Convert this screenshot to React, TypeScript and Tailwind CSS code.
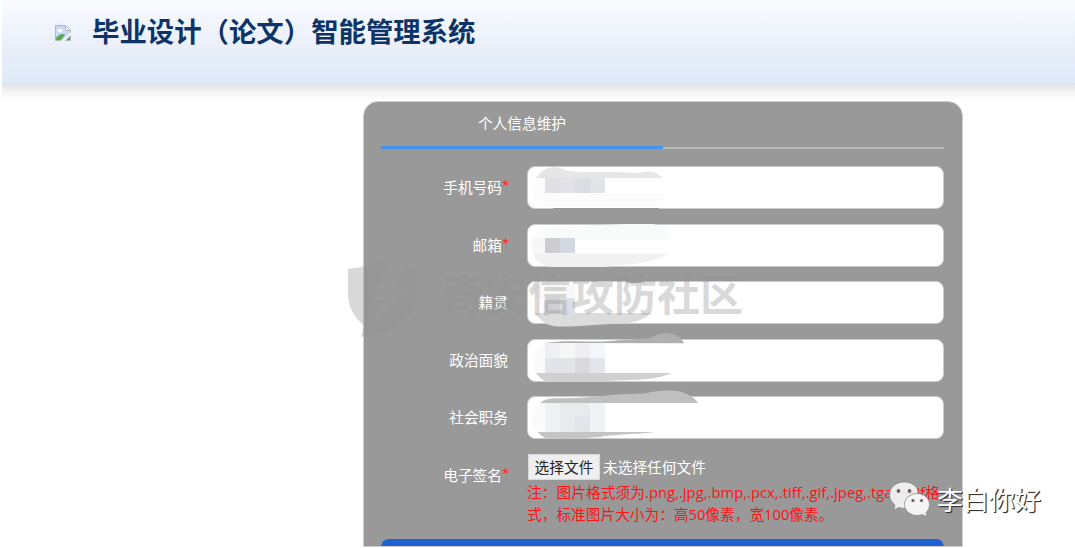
import type { ReactNode } from "react";

interface Field {
  label: string;
  required?: boolean;
  mask: ReactNode;
}

// Mosaic strokes, drawn in the coordinates of their own input
const phoneMask = (
  <>
    <path d="M9 12C4 20 6 32 12 41H128C140 36 142 22 138 12Z" fill="#fcfcfc" />
    <path d="M9 12C14 5 20 1 27 1S36 4 42 5C60 7 90 5 106 7C115 7 117 5 122 5.200C128 6 133 9 136 12Z" fill="#e6e6e6" />
    <rect x="18" y="12" width="15" height="15" fill="#e0e0e3" />
    <rect x="33" y="12" width="15" height="15" fill="#e1e1e7" />
    <rect x="48" y="12" width="15" height="15" fill="#dcdde3" />
    <rect x="63" y="12" width="15" height="15" fill="#e3e4ea" />
    <path d="M78 12H139V27H78Z" fill="#fff" />
    <rect x="26" y="42" width="106" height="1" fill="#979797" />
  </>
);

const mailMask = (
  <>
    <path d="M5 22C5 12 12 4 25 3L100 0H125C136 1 142 8 144 15H5Z" fill="#f9fbfa" />
    <path d="M6 14H19V30H6Q3 22 6 14Z" fill="#f7f7f7" />
    <path d="M6 29.500C9 37 15 42 25 43H78C95 40 125 41 141 29.500Z" fill="#f1f1f1" />
    <rect x="18" y="14" width="15" height="15" fill="#cdccd2" />
    <rect x="33" y="14" width="15" height="15" fill="#d4d8e1" />
  </>
);

const nativeMask = (
  <>
    <path d="M7 5C12 2 30 1 48 5V17H7Z" fill="#f7f8f7" />
    <rect x="18" y="17" width="15" height="15" fill="#cfd0d6" />
    <rect x="33" y="17" width="15" height="15" fill="#dcdee6" />
    <path d="M8 32C14 40 20 45 30 45.500C48 46 75 43 93 42.500C108 42 119 38 124 32Z" fill="#dcdcdc" />
    <path d="M97 1Q108 -1 119 1Q108 3 97 1Z" fill="#999" />
  </>
);

const politicsMask = (
  <>
    <path d="M17 4C8 10 4 16 5 22S7 31 9 35H19V4Z" fill="#fafafa" />
    <path d="M18 4C40 0 64 4 83 2L124 -1C129 -4 133 -6 139 -6C148 -6 154 -2 157 4.200Z" fill="#afafaf" />
    <rect x="18" y="4" width="15" height="15" fill="#f0eff3" />
    <rect x="33" y="4" width="15" height="15" fill="#f6f6f6" />
    <rect x="48" y="4" width="15" height="15" fill="#efeff2" />
    <rect x="63" y="4" width="15" height="15" fill="#f5f6f9" />
    <rect x="18" y="19" width="30" height="15" fill="#e2e4ea" />
    <rect x="48" y="19" width="15" height="15" fill="#dadade" />
    <rect x="63" y="19" width="15" height="15" fill="#e3e5eb" />
    <path d="M8.500 34C13 39 17 42 20 42.500H76C95 40 125 43 145 34Z" fill="#d0d0d0" />
  </>
);

const dutyMask = (
  <>
    <path d="M13 6.700C5 13 4 20 5 24S8 33 11 37H19V6.700Z" fill="#fafafa" />
    <path d="M13 7C18 3 22 2.500 30 2.300C54 2 68 1 83 -1C100 -3 112 -1 126 -4.300C134 -6 147 -6 153 -4.500C162 -2 168 2 171 7Z" fill="#bfbfbf" />
    <rect x="18" y="7" width="15" height="29" fill="#f0f1f4" />
    <rect x="33" y="7" width="30" height="29" fill="#e9eaed" />
    <rect x="48" y="21" width="15" height="15" fill="#e4e5ea" />
    <rect x="63" y="7" width="15" height="29" fill="#f1f2f4" />
    <path d="M11 36C15 41 18 42.300 23 42.500C40 43 60 42 73 41C85 38 105 39 128 36Z" fill="#c4c4c4" />
  </>
);

const fields: Field[] = [
  { label: "手机号码", required: true, mask: phoneMask },
  { label: "邮箱", required: true, mask: mailMask },
  { label: "籍贯", mask: nativeMask },
  { label: "政治面貌", mask: politicsMask },
  { label: "社会职务", mask: dutyMask },
];

function BrokenImage() {
  return (
    <svg width="16" height="16" viewBox="0 0 16 16" className="mt-[25px] shrink-0">
      <path d="M.500 .500H10.500L15.500 5.500V15.500H.500Z" fill="#c9dbf8" stroke="#b4b8be" />
      <path d="M10.500 .500V5.500H15.500Z" fill="#fff" stroke="#b4b8be" />
      <ellipse cx="5" cy="5.500" rx="2.500" ry="1.500" fill="#fff" />
      <path d="M1 15V13C4 9 8 8 10 10L6 15Z" fill="#57ab45" />
      <path d="M6 16L16 7V10L9.500 16Z" fill="#f2f5fc" />
      <path d="M11 15L15 11.500V15Z" fill="#57ab45" />
    </svg>
  );
}

function FieldLabel({ label, required }: { label: string; required?: boolean }) {
  return (
    <div className="flex w-[127px] shrink-0 justify-end text-white">
      {label}
      {required && <span className="w-[6px] text-[13px] text-[#ff1a1a]">*</span>}
    </div>
  );
}

function Watermark() {
  return (
    <div className="pointer-events-none absolute left-[348px] top-[260px] flex items-center">
      <svg width="70" height="80" viewBox="0 0 70 80" className="shrink-0">
        <path
          fillRule="evenodd"
          d="M0 9Q18 7 31 1Q37 0 40 4L24 40H36L25 64L59 28H45L57 6L68 9V34C68 54 52 66 33 74L13 77L16 66C5 56 0 46 0 34Z"
          fill="#929292"
          fillOpacity=".35"
        />
      </svg>
      <span className="ml-[24px] -mt-[12px] whitespace-nowrap text-[43px] leading-none font-bold text-[#929292]/35">
        奇安信攻防社区
      </span>
    </div>
  );
}

function WechatBadge() {
  return (
    <div className="absolute left-[888px] top-[480px] flex items-center">
      <svg width="44" height="40" viewBox="0 0 44 40" className="shrink-0">
        <g stroke="#808080" strokeWidth=".7">
          <path d="M16 2C8 2 1.500 7.500 1.500 15C1.500 19 4 22.500 7 25L5.500 30L11 27.500C15 29 19 28.500 21 28C31 25 33 10 26 5C23 3 20 2 16 2Z" fill="#f4f4f4" fillOpacity=".93" />
          <path d="M29 13.500C22 13.500 16.500 18.500 16.500 24.500S22 35.500 29 35.500C31 35.500 33 35 34.500 34.500L39 37L38 32.500C40 31 41.500 28 41.500 24.500C41.500 18.500 36 13.500 29 13.500Z" fill="#f4f4f4" />
        </g>
        <g fill="#666">
          <circle cx="10.500" cy="11" r="1.900" />
          <circle cx="21.500" cy="11" r="1.900" />
          <circle cx="25" cy="20.500" r="1.600" />
          <circle cx="33.500" cy="20.500" r="1.600" />
        </g>
      </svg>
      <span className="ml-[5px] text-[26px] leading-10 whitespace-nowrap text-white [text-shadow:1px_1px_1px_#333,1px_1px_0_#555]">
        李白你好
      </span>
    </div>
  );
}

export default function App() {
  return (
    <div className="relative h-[548px] w-[1075px] overflow-hidden bg-white font-['Open_Sans','Noto_Sans_CJK_SC',sans-serif] text-[14.7px]">
      <header className="ml-[2px] flex h-[83px] bg-linear-to-b from-[#f9fbff] via-[#ecf0fa] to-[#dee9f8] pl-[53px]">
        <BrokenImage />
        <h1 className="ml-[21px] mt-[12px] text-[27.4px] leading-10 font-bold text-[#0c3467]">
          毕业设计（论文）智能管理系统
        </h1>
      </header>
      <div className="ml-[2px] h-[18px] bg-linear-to-b from-[#dfe0e2] via-[#f4f4f4] to-white" />

      <main className="ml-[363px] h-[446px] w-[600px] overflow-hidden rounded-t-[15px] border border-[#cfcfcf] bg-[#999] pl-[17px] pr-[18px]">
        <div className="flex h-[47px] items-end">
          <div className="h-[47px] w-[282px] border-b-3 border-[#4394ee] text-center leading-[43px] text-white">
            个人信息维护
          </div>
          <div className="h-[2px] flex-1 bg-[#b9b9b9]" />
        </div>

        <form className="mt-[17px] flex flex-col gap-[14.500px]">
          {fields.map((field) => (
            <div key={field.label} className="flex h-[43px] items-center">
              <FieldLabel label={field.label} required={field.required} />
              <div className="relative ml-[19px] h-[43px] w-[417px] rounded-lg border border-[#ccc] bg-white">
                <svg width="180" height="46" className="absolute -left-px -top-px overflow-visible">
                  {field.mask}
                </svg>
              </div>
            </div>
          ))}

          <div className="flex">
            <div className="pt-[10px]">
              <FieldLabel label="电子签名" required />
            </div>
            <div className="ml-[19px] w-[417px]">
              <div className="flex h-[27px] items-center">
                <button type="button" className="ml-px flex h-[26px] w-[72px] shrink-0 items-center justify-center border border-[#d8d8d8] bg-[#efefef] whitespace-nowrap text-[#222]">
                  选择文件
                </button>
                <span className="ml-[3px] text-white">未选择任何文件</span>
              </div>
              <p className="leading-[22px] whitespace-nowrap text-[#fb1414]">
                <span className="tracking-[0.06px]">注：图片格式须为.png,.jpg,.bmp,.pcx,.tiff,.gif,.jpeg,.tga,.exif格</span>
                <br />
                式，标准图片大小为：高50像素，宽100像素。
              </p>
            </div>
          </div>
          <div className="h-10 rounded-lg bg-[#1e62cf]" />
        </form>
      </main>

      <Watermark />
      <WechatBadge />
    </div>
  );
}
